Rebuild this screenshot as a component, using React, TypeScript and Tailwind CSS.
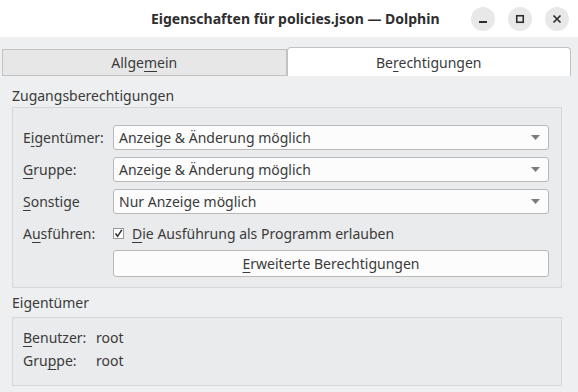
import React from 'react';

const font = { fontFamily: '"Noto Sans", "Open Sans", sans-serif' };

// underlined mnemonic letter
const M = ({ children }: { children: React.ReactNode }) => <span className="underline underline-offset-[3px] decoration-1">{children}</span>;

const Combo = ({ value }: { value: string }) => (
  <div className="flex h-[25px] flex-1 items-center justify-between rounded-[3px] border border-[#b9b9ba] bg-[#fcfcfc] pl-[5px] pr-[8px]">
    <span>{value}</span>
    <svg width="9" height="5" viewBox="0 0 9 5">
      <path d="M0 0 L9 0 L4.5 5 Z" fill="#7a7a7a" />
    </svg>
  </div>
);

const Row = ({ label, children }: { label: React.ReactNode; children: React.ReactNode }) => (
  <div className="flex items-center">
    <div className="w-[90px] shrink-0">{label}</div>
    {children}
  </div>
);

export default function App() {
  return (
    <div className="h-[392px] w-[578px] overflow-hidden bg-[#eeeff0] text-[14px] text-[#3a3a3a]" style={font}>
      {/* Title bar */}
      <div className="relative flex h-[37px] items-center bg-white">
        <div className="absolute left-[151px] top-[8px] font-bold text-[#2e2e2e]">Eigenschaften für policies.json — Dolphin</div>
        <div className="ml-auto mr-[9px] flex gap-[13px]">
          <button className="flex h-[24px] w-[24px] items-center justify-center rounded-full bg-[#e8e8e8]">
            <svg width="10" height="10" viewBox="0 0 10 10"><rect x="1" y="7" width="8" height="2" fill="#2e2e2e" /></svg>
          </button>
          <button className="flex h-[24px] w-[24px] items-center justify-center rounded-full bg-[#e8e8e8]">
            <svg width="10" height="10" viewBox="0 0 10 10"><rect x="1.75" y="1.75" width="6.5" height="6.5" fill="none" stroke="#2e2e2e" strokeWidth="1.6" /></svg>
          </button>
          <button className="flex h-[24px] w-[24px] items-center justify-center rounded-full bg-[#e8e8e8]">
            <svg width="10" height="10" viewBox="0 0 10 10"><path d="M1.5 1.5 L8.5 8.5 M8.5 1.5 L1.5 8.5" stroke="#2e2e2e" strokeWidth="1.7" /></svg>
          </button>
        </div>
      </div>

      {/* Tabs */}
      <div className="flex items-end px-[2px] pr-[7px] pt-[10px]">
        <div className="flex h-[27px] flex-1 items-center justify-center border border-[#c2c2c3] bg-[#e7e7e8] pb-[1px]">
          <span>Allge<M>m</M>ein</span>
        </div>
        <div className="flex h-[29px] flex-1 items-center justify-center rounded-t-[4px] border border-b-0 border-[#c2c2c3] bg-white">
          <span>Be<M>r</M>echtigungen</span>
        </div>
      </div>

      {/* Tab content */}
      <div className="px-[12px] pr-[16px]">
        <div className="pl-[-1px] pt-[10px] leading-[20px]">Zugangsberechtigungen</div>
        <div className="mt-[1px] flex flex-col gap-[7px] border border-[#d6d7d8] bg-[#eaebec] pb-[10px] pl-[10px] pr-[12px] pt-[17px]">
          <Row label={<span>E<M>i</M>gentümer:</span>}>
            <Combo value="Anzeige & Änderung möglich" />
          </Row>
          <Row label={<span><M>G</M>ruppe:</span>}>
            <Combo value="Anzeige & Änderung möglich" />
          </Row>
          <Row label={<span><M>S</M>onstige</span>}>
            <Combo value="Nur Anzeige möglich" />
          </Row>
          <Row label={<span>A<M>u</M>sführen:</span>}>
            <div className="flex h-[25px] items-center">
              <div className="mr-[8px] flex h-[11px] w-[11px] items-center justify-center border border-[#9a9a9a] bg-white">
                <svg width="9" height="9" viewBox="0 0 9 9"><path d="M1.5 4.5 L3.6 7.3 L7.8 0.8" fill="none" stroke="#2e2e2e" strokeWidth="1.5" /></svg>
              </div>
              <span><M>D</M>ie Ausführung als Programm erlauben</span>
            </div>
          </Row>
          <Row label={<span />}>
            <div className="-mt-[3px] flex h-[27px] flex-1 items-center justify-center rounded-[3px] border border-[#b9b9ba] bg-[#fcfcfc]">
              <span><M>E</M>rweiterte Berechtigungen</span>
            </div>
          </Row>
        </div>

        <div className="mt-[5px] leading-[20px]">Eigentümer</div>
        <div className="mt-[4px] flex flex-col gap-[3px] border border-[#d6d7d8] bg-[#eaebec] pb-[14px] pl-[10px] pt-[10px] leading-[20px]">
          <div className="flex">
            <span className="w-[73px]"><M>B</M>enutzer:</span>
            <span>root</span>
          </div>
          <div className="flex">
            <span className="w-[73px]">Gru<M>p</M>pe:</span>
            <span>root</span>
          </div>
        </div>
      </div>
    </div>
  );
}
